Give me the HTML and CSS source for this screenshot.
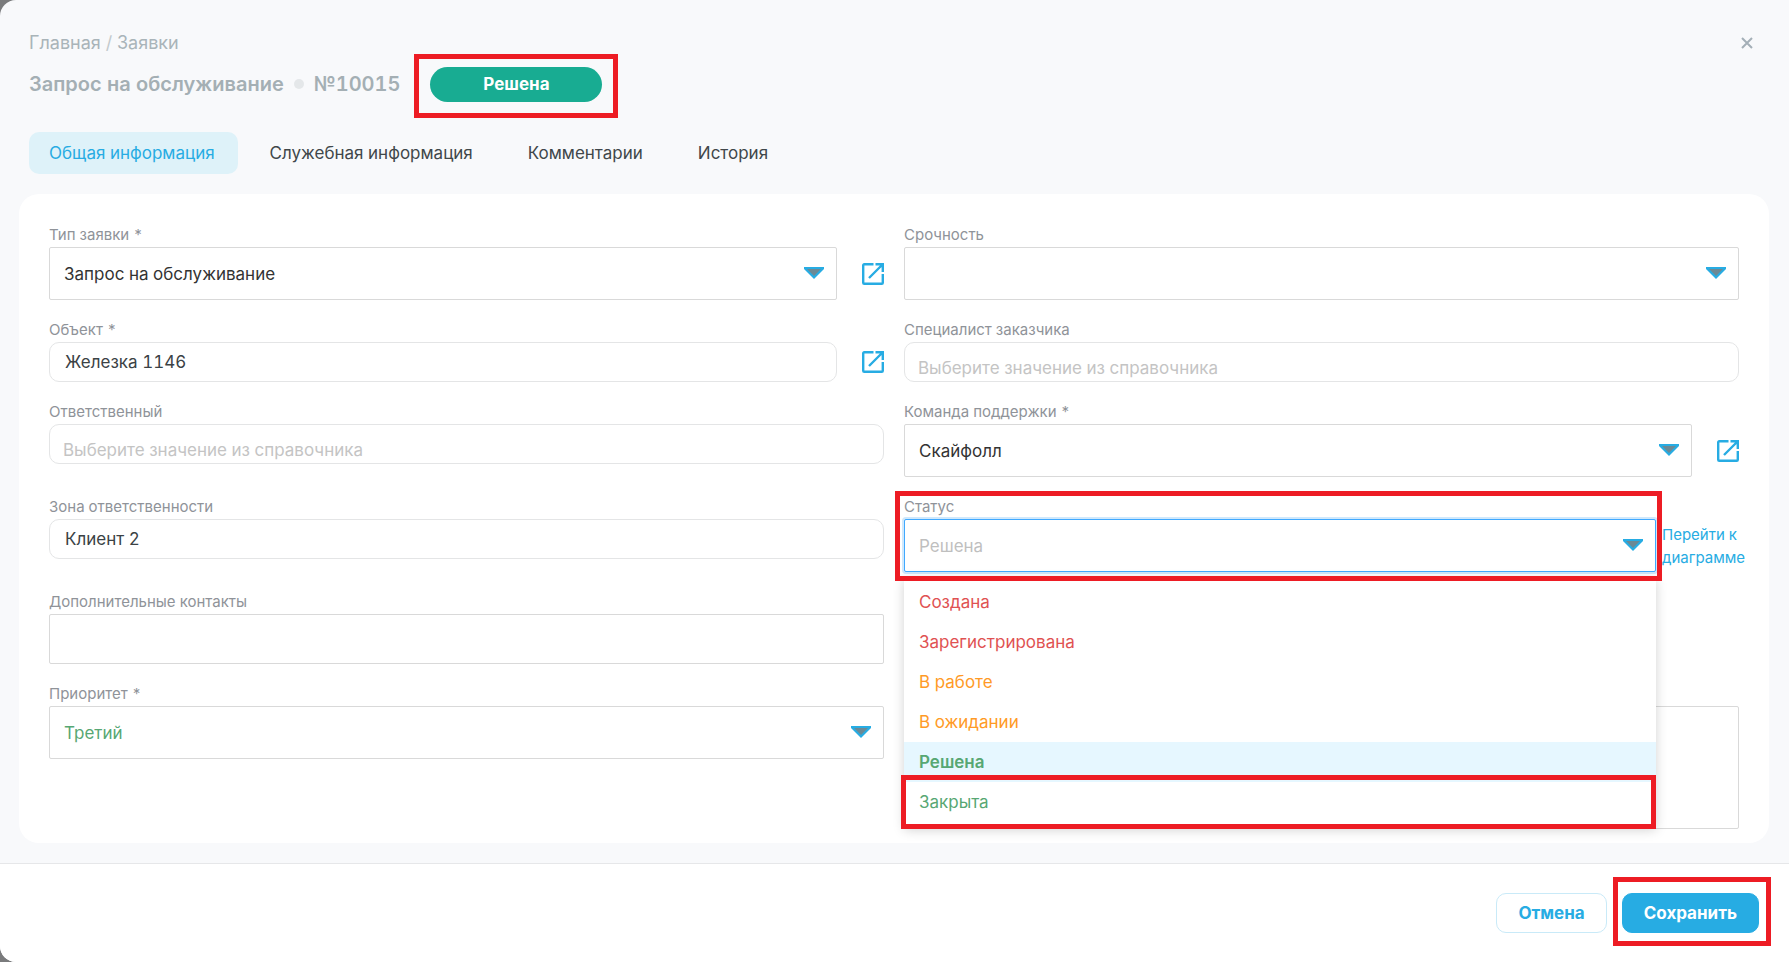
FILE: index.html
```html
<!DOCTYPE html>
<html lang="ru">
<head>
<meta charset="utf-8">
<meta name="viewport" content="width=device-width, initial-scale=1">
<title>Запрос на обслуживание №10015</title>
<link rel="stylesheet" href="styles.css">
</head>
<body>
<svg class="sprite" aria-hidden="true">
  <symbol id="caret" viewBox="0 0 20 12"><path d="M0 0h20v2l-10 10L0 2z" fill="#27ace3"/><path d="M3 2h14l-7 7z" fill="#6b8995"/></symbol>
  <symbol id="open" viewBox="0 0 22 22"><path d="M11.5 1.2H2.2a1 1 0 0 0-1 1v17.6a1 1 0 0 0 1 1h17.6a1 1 0 0 0 1-1V11M13.5 1.2h7.3V9M7 15 20.5 1.5" fill="none" stroke="#27ace3" stroke-width="2.4"/></symbol>
</svg>
<div class="modal">
  <header class="head">
    <div class="head-top">
      <nav class="crumbs"><a href="#">Главная</a> <span>/</span> <a href="#">Заявки</a></nav>
      <button class="close" type="button" aria-label="Закрыть"><svg viewBox="0 0 12 12"><path d="M1 1l10 10M11 1 1 11" stroke="#a4afb7" stroke-width="2"/></svg></button>
    </div>
    <div class="title-row">
      <h1 class="title">Запрос на обслуживание <i class="dot"></i> №10015</h1>
      <div class="marked mark-pill"><span class="pill">Решена</span></div>
    </div>
    <div class="tabs" role="tablist">
      <button class="tab active" type="button" role="tab" aria-selected="true">Общая информация</button>
      <button class="tab" type="button" role="tab">Служебная информация</button>
      <button class="tab" type="button" role="tab">Комментарии</button>
      <button class="tab" type="button" role="tab">История</button>
    </div>
  </header>

  <main class="card">
    <div class="field">
      <label for="type">Тип заявки *</label>
      <div class="line">
        <div class="drop"><select id="type"><option>Запрос на обслуживание</option></select><svg class="caret"><use href="#caret"/></svg></div>
        <a class="open" href="#" aria-label="Открыть"><svg><use href="#open"/></svg></a>
      </div>
    </div>
    <div class="field">
      <label for="urgency">Срочность</label>
      <div class="line">
        <div class="drop"><select id="urgency"><option></option></select><svg class="caret"><use href="#caret"/></svg></div>
      </div>
    </div>

    <div class="field">
      <label for="object">Объект *</label>
      <div class="line">
        <input class="lookup" id="object" type="text" value="Железка 1146">
        <a class="open" href="#" aria-label="Открыть"><svg><use href="#open"/></svg></a>
      </div>
    </div>
    <div class="field">
      <label for="client">Специалист заказчика</label>
      <div class="line"><input class="lookup empty" id="client" type="text" placeholder="Выберите значение из справочника"></div>
    </div>

    <div class="field">
      <label for="owner">Ответственный</label>
      <div class="line"><input class="lookup empty" id="owner" type="text" placeholder="Выберите значение из справочника"></div>
    </div>
    <div class="field">
      <label for="team">Команда поддержки *</label>
      <div class="line">
        <div class="drop"><select id="team"><option>Скайфолл</option></select><svg class="caret"><use href="#caret"/></svg></div>
        <a class="open" href="#" aria-label="Открыть"><svg><use href="#open"/></svg></a>
      </div>
    </div>

    <div class="field">
      <label for="zone">Зона ответственности</label>
      <div class="line"><input class="lookup" id="zone" type="text" value="Клиент 2"></div>
    </div>
    <div class="field status">
      <label for="status">Статус</label>
      <div class="line">
        <div class="drop focused">
          <select id="status"><option>Решена</option></select><svg class="caret"><use href="#caret"/></svg>
          <ul class="menu" role="listbox" aria-label="Статус">
            <li class="red" role="option">Создана</li>
            <li class="red" role="option">Зарегистрирована</li>
            <li class="orange" role="option">В работе</li>
            <li class="orange" role="option">В ожидании</li>
            <li class="green chosen" role="option" aria-selected="true">Решена</li>
            <li class="green marked mark-option" role="option">Закрыта</li>
          </ul>
          <div class="marked mark-status"></div>
        </div>
        <a class="diagram" href="#">Перейти к диаграмме</a>
      </div>
    </div>

    <div class="field wide-left">
      <label for="contacts">Дополнительные контакты</label>
      <div class="line"><input class="plain" id="contacts" type="text"></div>
    </div>

    <div class="field wide-left">
      <label for="priority">Приоритет *</label>
      <div class="line">
        <div class="drop"><select class="green" id="priority"><option>Третий</option></select><svg class="caret"><use href="#caret"/></svg></div>
      </div>
    </div>
    <div class="field notes">
      <textarea aria-label="Описание"></textarea>
    </div>
  </main>

  <footer class="foot">
    <button class="btn" type="button">Отмена</button>
    <div class="marked mark-save"><button class="btn primary" type="button">Сохранить</button></div>
  </footer>
</div>
</body>
</html>
```
FILE: styles.css
```css
* { box-sizing: border-box; }

body {
  margin: 0;
  background: #7a7b7c;
  font: 17px/24px Inter, "Liberation Sans", sans-serif;
  font-variant-numeric: tabular-nums;
  color: #333;
}

button, input, select, textarea { font: inherit; font-variant-numeric: inherit; color: inherit; }
a { color: inherit; text-decoration: none; }
.sprite { position: absolute; width: 0; height: 0; }

.modal {
  display: flex;
  flex-direction: column;
  min-height: 100vh;
  background: #f8f9fb;
  border-radius: 16px 0 0 16px;
  overflow: hidden;
}

.head { padding: 31px 29px 0; }
.head-top { display: flex; justify-content: space-between; align-items: center; }
.crumbs { font-size: 18px; color: #a9b4b9; }
.crumbs span { color: #c3cacd; }
.close { display: flex; margin-right: 7px; padding: 0; border: 0; background: none; }
.close svg { width: 12px; height: 12px; }

.title-row { display: flex; align-items: center; height: 36px; margin-top: 11px; }
.title { display: flex; align-items: center; gap: 10px; margin: 0; font-size: 20px; font-weight: 600; color: #a4afb4; }
.dot { width: 10px; height: 10px; border-radius: 50%; background: #e4e7e9; }
.pill {
  display: block;
  width: 172px;
  border-radius: 18px;
  background: #18ac92;
  color: #fff;
  font-weight: 700;
  line-height: 35px;
  text-align: center;
}

/* Red attention frames drawn around key elements */
.marked { position: relative; }
.marked::after { content: ""; position: absolute; border: 5px solid #ed1c24; pointer-events: none; }
.mark-pill { margin-left: 30px; }
.mark-pill::after { inset: -13px -16px -16px; }
.mark-status { position: absolute; inset: 0; pointer-events: none; z-index: 3; }
.mark-status::after { inset: -28px -6px -9px -9px; }
.mark-option::after { inset: -7px 0 -7px -3px; }
.mark-save::after { inset: -16px -12px -13px -9px; }

.tabs { display: flex; gap: 12px; margin-top: 30px; }
.tab { height: 42px; padding: 0 23px 0 20px; border: 0; border-radius: 10px; background: none; color: #40474a; }
.tab.active { background: #def2f9; color: #27ace3; }

.card {
  display: grid;
  grid-template-columns: 1fr 1fr;
  gap: 20px;
  align-items: start;
  margin: 20px 20px 20px 19px;
  padding: 31px 30px 14px;
  background: #fff;
  border-radius: 20px;
}

.field label { display: block; margin-bottom: 2px; font-size: 15px; line-height: 20px; color: #8f9399; }
.line { display: flex; align-items: center; }
.wide-left { grid-column: 1; }

.drop { position: relative; flex: 1; }
.drop select {
  display: block;
  width: 100%;
  height: 53px;
  padding: 0 45px 0 14px;
  border: 1px solid #d9d9d9;
  border-radius: 2px;
  background: #fff;
  appearance: none;
  outline: 0;
}
.caret { position: absolute; right: 13px; top: 20px; width: 20px; height: 12px; pointer-events: none; }
.focused select { border-color: #40a9ff; box-shadow: 0 0 0 2px #cfe8fc; color: #bfbfbf; }

.lookup, .plain {
  flex: 1;
  min-width: 0;
  height: 40px;
  padding: 0 15px;
  border: 1px solid #e4e5e6;
  border-radius: 10px;
  background: #fff;
}
.lookup { color: #3b4245; }
.lookup.empty { padding: 11px 13px 0; }
.lookup::placeholder { color: #c4c4c4; opacity: 1; }
.plain { height: 50px; border-color: #d9d9d9; border-radius: 2px; }

.open { display: flex; margin-left: 25px; }
.open svg { width: 22px; height: 22px; }
.diagram { width: 77px; margin-left: 6px; font-size: 15px; line-height: 23px; color: #27ace3; }

.menu {
  position: absolute;
  z-index: 2;
  top: 58px;
  left: 0;
  right: 0;
  margin: 0;
  padding: 5px 0;
  list-style: none;
  background: #fff;
  border-radius: 2px;
  box-shadow: 0 3px 12px rgba(0, 0, 0, .18);
}
.menu li { padding: 8px 15px; }
.menu .chosen { background: #e6f7ff; font-weight: 600; }
.red { color: #e05252; }
.orange { color: #ff9a26; }
.green, .drop select.green { color: #57a773; }

.notes { margin-top: 22px; }
.notes textarea { display: block; width: 100%; height: 123px; border: 1px solid #d9d9d9; border-radius: 2px; resize: none; }

.foot {
  flex: 1;
  display: flex;
  justify-content: flex-end;
  align-items: flex-start;
  gap: 15px;
  padding: 29px 30px 29px;
  border-top: 1px solid #e6e7e9;
  background: #fff;
}
.btn { display: block; height: 40px; padding: 0 21px; border: 1px solid #c9eaf8; border-radius: 10px; background: #fff; color: #27ace3; font-weight: 700; }
.btn.primary { border-color: #27ace3; background: #27ace3; color: #fff; }
```
